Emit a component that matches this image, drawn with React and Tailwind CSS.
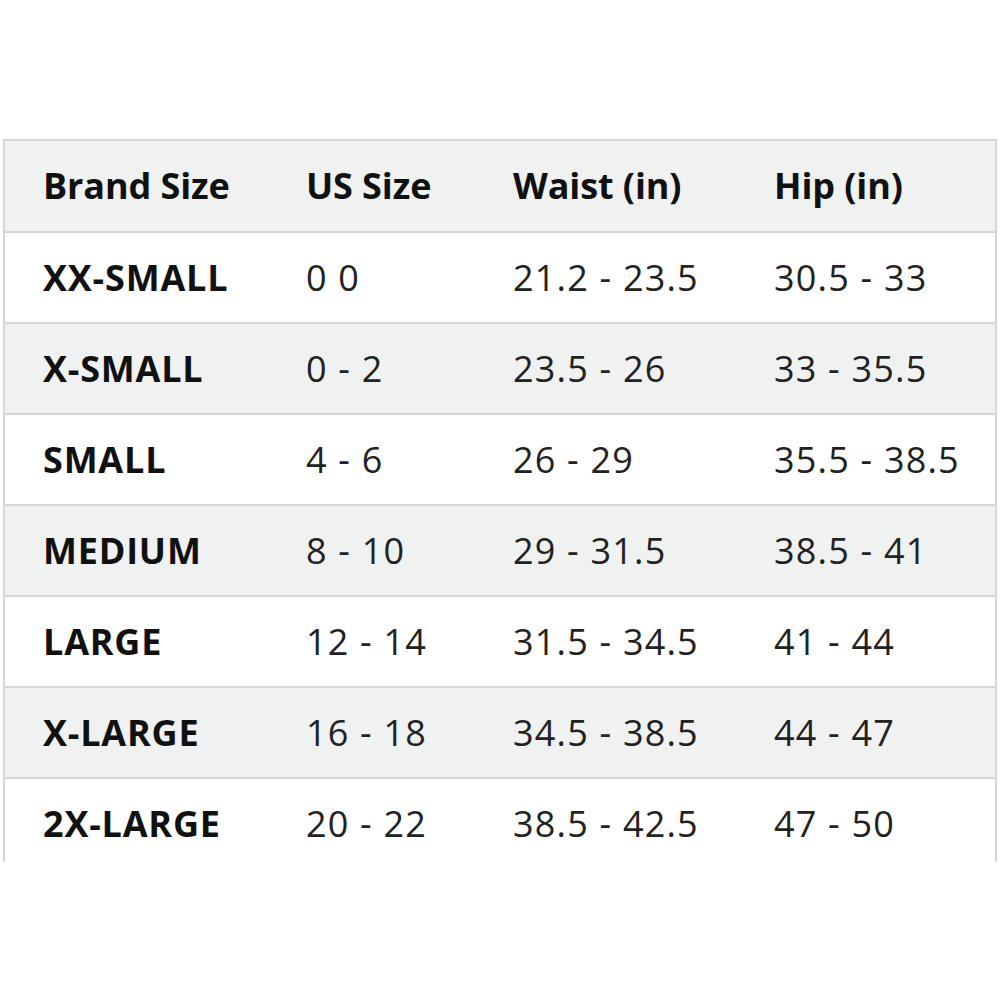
import React from "react";

const rows = [
  ["XX-SMALL", "0 0", "21.2 - 23.5", "30.5 - 33"],
  ["X-SMALL", "0 - 2", "23.5 - 26", "33 - 35.5"],
  ["SMALL", "4 - 6", "26 - 29", "35.5 - 38.5"],
  ["MEDIUM", "8 - 10", "29 - 31.5", "38.5 - 41"],
  ["LARGE", "12 - 14", "31.5 - 34.5", "41 - 44"],
  ["X-LARGE", "16 - 18", "34.5 - 38.5", "44 - 47"],
  ["2X-LARGE", "20 - 22", "38.5 - 42.5", "47 - 50"],
];

const cols = "grid grid-cols-[263px_207px_262px_1fr]";

export default function App() {
  return (
    <div className="w-[1000px] h-[1000px] bg-white pt-[139px] pl-[3px] pr-[3px] font-['Open_Sans',sans-serif] text-[#111]">
      <div className="h-[723px] overflow-hidden border-2 border-b-0 border-[#d5d7d7]">
        {/* header */}
        <div className={`${cols} h-[90px] items-center bg-[#f0f1f1] font-bold text-[36px] tracking-[-0.1px]`}>
          <div className="pl-[38px]">Brand Size</div>
          <div className="pl-[38px]">US Size</div>
          <div className="pl-[38px]">Waist (in)</div>
          <div className="pl-[37px]">Hip (in)</div>
        </div>
        {rows.map((r, i) => (
          <div
            key={r[0]}
            className={`${cols} h-[91px] items-center border-t-2 border-[#d5d7d7] text-[36px] ${i % 2 ? "bg-[#f0f1f1]" : "bg-white"}`}
          >
            <div className="pl-[38px] font-bold tracking-[0.8px]">{r[0]}</div>
            <div className="pl-[38px] text-[#222] tracking-[1.2px]">{r[1]}</div>
            <div className="pl-[38px] text-[#222] tracking-[1.2px]">{r[2]}</div>
            <div className="pl-[37px] text-[#222] tracking-[1.2px]">{r[3]}</div>
          </div>
        ))}
      </div>
    </div>
  );
}
